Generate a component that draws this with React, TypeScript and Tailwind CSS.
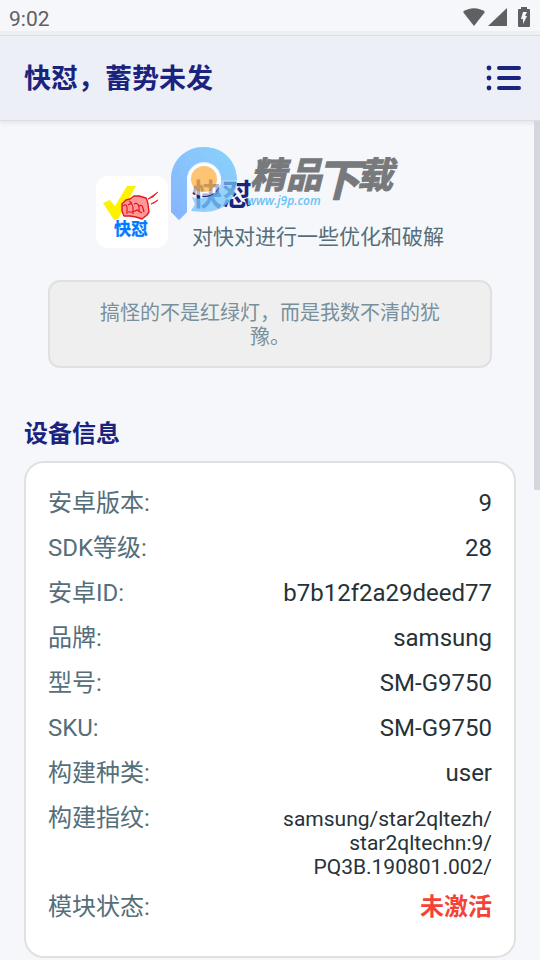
import { useState } from "react";

const deviceInfo: { label: string; value: string }[] = [
  { label: "安卓版本:", value: "9" },
  { label: "SDK等级:", value: "28" },
  { label: "安卓ID:", value: "b7b12f2a29deed77" },
  { label: "品牌:", value: "samsung" },
  { label: "型号:", value: "SM-G9750" },
  { label: "SKU:", value: "SM-G9750" },
  { label: "构建种类:", value: "user" },
];

const fingerprint = ["samsung/star2qltezh/", "star2qltechn:9/", "PQ3B.190801.002/"];

const StatusBar: React.FC = () => (
  <div className="flex h-[35px] items-center justify-between border-b-4 border-[#eeeff1] pl-[9px] pr-[10px] text-[#5f6062]">
    <span className="pt-[6px] text-[21px] leading-6">9:02</span>
    <div className="flex items-end pt-[3px]">
      <svg width="24" height="20" viewBox="0 0 24 20" fill="currentColor">
        <path d="M1 5C7 0 17 0 23 5L12 19Z" />
      </svg>
      <svg className="ml-[2px]" width="19" height="20" viewBox="0 0 19 20" fill="currentColor">
        <path d="M0 19L19 1V19Z" />
      </svg>
      <svg className="ml-[11px]" width="12" height="20" viewBox="0 0 12 20">
        <path
          d="M3 0H9V2H11Q12 2 12 3V19Q12 20 11 20H1Q0 20 0 19V3Q0 2 1 2H3Z"
          fill="currentColor"
        />
        <path d="M5 5H9L7 9H9L5 17V12H3Z" fill="#f6f7fc" />
      </svg>
    </div>
  </div>
);

const AppLogo: React.FC = () => (
  <svg className="mt-7 h-[72px] w-[72px] shrink-0 rounded-xl bg-white" viewBox="0 0 72 72">
    <path d="M7 27L14 24L19 30L31 10H40L22 43L18 44Z" fill="#fff200" />
    <path
      d="M26 28L30 24L34 23L38 20L43 20L50 22L51 24L52 28L53 36L51 39L46 43L40 41L34 40L28 40L26 35Z"
      fill="#ff9999"
      stroke="#e8141c"
      strokeWidth="1.4"
      strokeLinejoin="round"
    />
    <path
      d="M27 30Q31 27 31 32V38M32 29Q36 26 37 31V38M38 28Q42 26 43 31V36M43 30Q46 28 47 32L48 36M33 25Q35 26 36 28M32 36H37L41 34L46 37"
      fill="none"
      stroke="#e8141c"
      strokeWidth="1.2"
    />
    <path d="M52 23L62 16L57 21ZM55 28L62 24L58 27Z" fill="#ff2020" stroke="#ff2020" />
    <text
      x="18"
      y="59"
      fontSize="17"
      fontWeight="700"
      fill="#007bff"
      stroke="#007bff"
      strokeWidth="0.3"
    >
      快怼
    </text>
  </svg>
);

const Watermark: React.FC = () => (
  <svg
    className="pointer-events-none absolute left-[171px] top-[26px]"
    width="228"
    height="76"
    viewBox="0 0 228 76"
  >
    <defs>
      <linearGradient id="stem" x1="0" y1="1" x2="1" y2="0">
        <stop offset="0" stopColor="#7cadff" />
        <stop offset="1" stopColor="#7ed0fb" />
      </linearGradient>
    </defs>
    <path
      d="M0 65V33C0 13 15 0 33 0C52 0 66 14 66 33C66 53 52 65 33 65L20 64L24 57L21 50Q27 54 33 50A17 17 0 1 0 16 33V65L8 73Z"
      fill="url(#stem)"
      fillOpacity="0.7"
    />
    <path
      d="M0 65V33C0 13 15 0 33 0C52 0 66 14 66 33H50A17 17 0 1 0 16 33V65L8 73Z"
      fill="url(#stem)"
      fillOpacity="0.7"
    />
    <path d="M20 50Q43 55 57 38Q66 40 62 48Q53 66 20 64L25 57Z" fill="#70dcfa" fillOpacity="0.3" />
    <circle cx="33" cy="32" r="15" fill="none" stroke="#fff" strokeWidth="4" strokeOpacity="0.65" />
    <circle cx="33" cy="32" r="13" fill="#ffb74d" fillOpacity="0.78" />
    <g fill="#77797c" stroke="#77797c" fontWeight="700" fontStyle="italic">
      <text x="79" y="41" fontSize="36">
        精品
      </text>
      <text x="145" y="49" fontSize="44">
        下
      </text>
      <text x="186" y="41" fontSize="36">
        载
      </text>
    </g>
    <text
      x="76"
      y="58"
      fontSize="12"
      fontStyle="italic"
      fontWeight="600"
      fontFamily="Open Sans, sans-serif"
      fill="#66c2f7"
    >
      www.j9p.com
    </text>
  </svg>
);

const InfoRow: React.FC<{ label: string; children: React.ReactNode }> = ({ label, children }) => (
  <div className="flex items-start justify-between">
    <dt className="text-2xl leading-[45px] text-[#546e7a]">{label}</dt>
    <dd className="text-right text-2xl leading-[45px] text-[#263238]">{children}</dd>
  </div>
);

const App: React.FC = () => {
  const [menuOpen, setMenuOpen] = useState(false);

  return (
    <div className="min-h-screen bg-[#f5f7fb] font-['Roboto','Noto_Sans_CJK_SC',sans-serif]">
      <StatusBar />

      <header className="relative flex h-[86px] items-center justify-between border-y border-[#dadde2] bg-[#eceff5] pl-6 pr-[18px] shadow-[0_3px_4px_rgba(0,0,0,0.06)]">
        <h1 className="pt-[2px] text-[27px] font-bold text-[#1a237e]">快怼，蓄势未发</h1>
        <button type="button" aria-label="菜单" aria-expanded={menuOpen} onClick={() => setMenuOpen(!menuOpen)}>
          <svg width="36" height="26" viewBox="0 0 36 26" stroke="#1a237e" strokeWidth="4" strokeLinecap="round">
            <path d="M13 3H33M13 13H33M13 23H33" />
            <g fill="#1a237e" stroke="none">
              <circle cx="3" cy="3" r="2.4" />
              <circle cx="3" cy="13" r="2.4" />
              <circle cx="3" cy="23" r="2.4" />
            </g>
          </svg>
        </button>
      </header>

      <main className="relative px-6 pb-1">
        <div className="absolute right-0 top-0 h-[369px] w-[6px] bg-[#d6d7dc]" />

        <section className="flex justify-center gap-6 pt-[27px]">
          <AppLogo />
          <div className="pt-6">
            <h2 className="w-fit text-3xl leading-[45px] font-bold text-[#1a237e]">快怼</h2>
            <p className="pt-1 text-[21px] leading-8 text-[#546e7a]">对快对进行一些优化和破解</p>
          </div>
        </section>
        <Watermark />

        <p className="mx-6 mt-[27px] rounded-xl border-2 border-[#e0e0e0] bg-[#efefef] px-12 pt-[19px] pb-[17px] text-center text-xl leading-6 text-[#78909c]">
          搞怪的不是红绿灯，而是我数不清的犹豫。
        </p>

        <h2 className="mt-12 text-2xl leading-9 font-bold text-[#1a237e]">设备信息</h2>

        <dl className="mt-[9px] rounded-[20px] border-2 border-[#e0e0e0] bg-white px-[22px] pt-[18px] pb-[26px]">
          {deviceInfo.map((item) => (
            <InfoRow key={item.label} label={item.label}>
              {item.value}
            </InfoRow>
          ))}
          <div className="flex items-start justify-between">
            <dt className="text-2xl leading-[45px] text-[#546e7a]">构建指纹:</dt>
            <dd className="pt-[11px] pb-[6px] text-right text-[21px] leading-6 text-[#263238]">
              {fingerprint.map((part) => (
                <span key={part} className="block">
                  {part}
                </span>
              ))}
            </dd>
          </div>
          <InfoRow label="模块状态:">
            <span className="font-bold text-[#f44336]">未激活</span>
          </InfoRow>
        </dl>
      </main>
    </div>
  );
};

export default App;
